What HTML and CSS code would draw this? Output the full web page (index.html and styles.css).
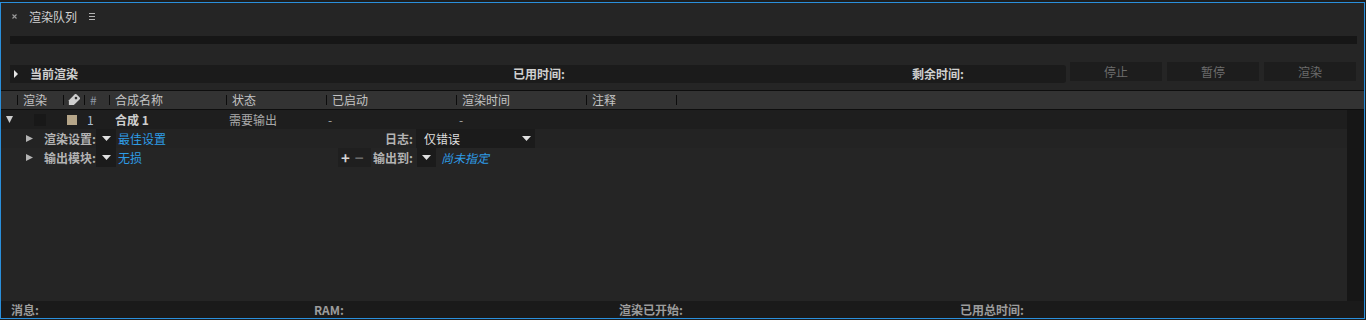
FILE: index.html
```html
<!DOCTYPE html>
<html lang="zh-CN">

<head>
  <meta charset="UTF-8">
  <meta name="viewport" content="width=device-width, initial-scale=1.0">
  <title>渲染队列</title>
  <link rel="stylesheet" href="styles.css">
</head>

<body>

  <section class="panel">
    <!-- Tab -->
    <div class="tab">
      <svg class="tab-close" width="5" height="5" viewBox="0 0 5 5">
        <path d="M0.5 0.5 L4.5 4.5 M4.5 0.5 L0.5 4.5" stroke="#9a9a9a" stroke-width="1.1" />
      </svg>
      <span class="tab-title">渲染队列</span>
      <svg class="tab-menu" width="6" height="7" viewBox="0 0 6 7">
        <path d="M0 0.5 H6 M0 3.5 H6 M0 6.5 H6" stroke="#b4b4b4" stroke-width="1" />
      </svg>
    </div>

    <div class="progress"></div>

    <!-- Current render -->
    <div class="status">
      <div class="current">
        <svg class="cur-twirl" width="4" height="8" viewBox="0 0 4 8">
          <polygon points="0,0 4,4 0,8" fill="#e6e6e6" />
        </svg>
        <span class="cur-title">当前渲染</span>
        <span class="cur-elapsed">已用时间:</span>
        <span class="cur-remain">剩余时间:</span>
      </div>
      <button class="btn">停止</button>
      <button class="btn">暂停</button>
      <button class="btn">渲染</button>
    </div>

    <!-- Column headers -->
    <div class="columns">
      <span class="col w-render">渲染</span>
      <span class="col w-label col-tag">
        <svg width="13" height="13" viewBox="0 0 13 13">
          <g transform="rotate(-45 6.5 6.5)">
            <path d="M0 6.5 L3.5 3 H11.5 a1.5 1.5 0 0 1 1.5 1.5 V8.5 a1.5 1.5 0 0 1 -1.5 1.5 H3.5 Z" fill="#cfcfcf" />
            <circle cx="10" cy="6.5" r="1.3" fill="#333" />
          </g>
        </svg>
      </span>
      <span class="col w-num col-hash">#</span>
      <span class="col w-name">合成名称</span>
      <span class="col w-state">状态</span>
      <span class="col w-start">已启动</span>
      <span class="col w-time">渲染时间</span>
      <span class="col w-note">注释</span>
      <span class="col"></span>
    </div>

    <!-- Queue -->
    <div class="queue">
      <div class="items">
        <div class="item">
          <span class="item-twirl">
            <svg width="7" height="7" viewBox="0 0 7 7">
              <polygon points="0,0 7,0 3.5,7" fill="#cccccc" />
            </svg>
          </span>
          <span class="cell w-render"><span class="check"></span></span>
          <span class="cell w-label"><span class="swatch"></span></span>
          <span class="cell w-num item-num">1</span>
          <span class="cell w-name item-name">合成 1</span>
          <span class="cell w-state item-state">需要输出</span>
          <span class="cell w-start item-dash">-</span>
          <span class="cell w-time item-dash dash-time">-</span>
        </div>

        <div class="sub sub-render">
          <span class="sub-twirl">
            <svg width="7" height="7" viewBox="0 0 7 7">
              <polygon points="0,0 7,3.5 0,7" fill="#b4b4b4" />
            </svg>
          </span>
          <span class="sub-label">渲染设置:</span>
          <span class="drop">
            <svg width="9" height="5" viewBox="0 0 9 5">
              <polygon points="0,0 9,0 4.5,5" fill="#e0e0e0" />
            </svg>
          </span>
          <span class="sub-value value-render">最佳设置</span>
          <span class="sub-label label-right">日志:</span>
          <span class="select">
            仅错误
            <svg width="9" height="5" viewBox="0 0 9 5">
              <polygon points="0,0 9,0 4.5,5" fill="#e0e0e0" />
            </svg>
          </span>
        </div>

        <div class="sub sub-output">
          <span class="sub-twirl">
            <svg width="7" height="7" viewBox="0 0 7 7">
              <polygon points="0,0 7,3.5 0,7" fill="#b4b4b4" />
            </svg>
          </span>
          <span class="sub-label">输出模块:</span>
          <span class="drop">
            <svg width="9" height="5" viewBox="0 0 9 5">
              <polygon points="0,0 9,0 4.5,5" fill="#e0e0e0" />
            </svg>
          </span>
          <span class="sub-value value-output">无损</span>
          <span class="plus-minus">
            <span class="plus">+</span>
            <span class="minus">−</span>
          </span>
          <span class="sub-label label-right">输出到:</span>
          <span class="drop drop-to">
            <svg width="9" height="5" viewBox="0 0 9 5">
              <polygon points="0,0 9,0 4.5,5" fill="#e0e0e0" />
            </svg>
          </span>
          <span class="sub-value value-to">尚未指定</span>
        </div>
      </div>
      <div class="scroll"></div>
    </div>

    <!-- Footer -->
    <footer class="footer">
      <span class="foot-msg">消息:</span>
      <span class="foot-ram">RAM:</span>
      <span class="foot-start">渲染已开始:</span>
      <span>已用总时间:</span>
    </footer>
  </section>

</body>

</html>
```

FILE: styles.css
```css
* {
  box-sizing: border-box;
}

body {
  margin: 0;
  background: #1e1e1e;
  font-family: "Noto Sans CJK SC", "Noto Sans", sans-serif;
  font-size: 12px;
  color: #c8c8c8;
}

/* Panel */
.panel {
  margin-top: 2px;
  width: 1365px;
  height: 317px;
  border: 1px solid #2a8fdb;
  background: #252525;
  display: flex;
  flex-direction: column;
}

.tab {
  height: 27px;
  display: flex;
  align-items: center;
  padding-left: 11px;
}

.tab-title {
  margin-left: 12px;
  width: 48px;
  color: #d2d2d2;
  line-height: 1;
}

.tab-menu {
  margin-left: 12px;
}

.progress {
  margin: 6px 7px 0 9px;
  height: 8px;
  background: #161616;
}

/* Current render */
.status {
  margin-top: 18px;
  height: 21px;
  padding: 0 8px 0 9px;
  display: flex;
  align-items: flex-start;
}

.current {
  margin-top: 3px;
  width: 1056px;
  height: 18px;
  margin-right: 4px;
  background: #1b1b1b;
  border-radius: 0 3px 3px 0;
  display: flex;
  align-items: center;
  padding-left: 4px;
  font-weight: bold;
  color: #d0d0d0;
  line-height: 1;
}

.cur-title {
  margin-left: 12px;
  width: 483px;
}

.cur-elapsed {
  width: 399px;
}

.btn {
  width: 92px;
  height: 19px;
  margin-left: 5px;
  padding: 0;
  border: none;
  background: #1d1d1d;
  color: #6c6c6c;
  font-family: inherit;
  font-size: 12px;
  line-height: 1;
}

.current + .btn {
  margin-left: 0;
}

/* Column headers */
.columns {
  margin-top: 7px;
  height: 20px;
  border-top: 1px solid #0e0e0e;
  border-bottom: 1px solid #0e0e0e;
  background: #333333;
  display: flex;
  align-items: center;
  padding-left: 16px;
  color: #c4c4c4;
  line-height: 1;
}

.col {
  display: flex;
  align-items: center;
  height: 18px;
}

.col::before {
  content: "";
  width: 1px;
  height: 10px;
  background: #0c0c0c;
  margin-right: 5px;
}

.col-tag::before {
  margin-right: 3px;
}

.col-hash {
  color: #8f99a6;
}

.w-render { width: 46px; }
.w-label { width: 21px; }
.w-num { width: 25px; }
.w-name { width: 117px; }
.w-state { width: 100px; }
.w-start { width: 130px; }
.w-time { width: 130px; }
.w-note { width: 90px; }

/* Queue */
.queue {
  flex: 1;
  display: flex;
}

.items {
  flex: 1;
}

.scroll {
  width: 17px;
  background: #161616;
}

.item {
  height: 19px;
  background: #1e1e1e;
  display: flex;
  align-items: center;
  line-height: 1;
}

.item-twirl {
  width: 16px;
  padding-left: 5px;
  display: flex;
}

.cell {
  display: flex;
  align-items: center;
}

.check {
  margin-left: 17px;
  width: 12px;
  height: 12px;
  background: #181818;
}

.swatch {
  margin-left: 4px;
  width: 10px;
  height: 10px;
  background: #b5a588;
}

.item-num {
  padding-left: 3px;
  color: #a9bfd6;
}

.item-name {
  padding-left: 6px;
  font-weight: bold;
  color: #cfcfcf;
}

.item-state {
  padding-left: 3px;
  color: #a8a8a8;
}

.item-dash {
  padding-left: 2px;
  color: #a8a8a8;
}

.dash-time {
  padding-left: 3px;
}

/* Sub rows */
.sub {
  height: 19px;
  display: flex;
  align-items: center;
  padding-left: 25px;
  line-height: 1;
}

.sub-render {
  background: #232323;
}

.sub-twirl {
  width: 9px;
  display: flex;
}

.sub-label {
  width: 61px;
  text-align: right;
  font-weight: bold;
  color: #b4b4b4;
}

.label-right {
  width: 42px;
}

.drop {
  width: 20px;
  height: 19px;
  background: #1b1b1b;
  display: flex;
  align-items: center;
  justify-content: center;
}

.drop-to {
  margin-left: 4px;
  width: 19px;
}

.sub-value {
  margin-left: 2px;
  color: #2e9ce6;
}

.value-render {
  width: 253px;
}

.value-output {
  width: 220px;
}

.value-to {
  margin-left: 5px;
  font-style: italic;
}

.select {
  margin-left: 3px;
  width: 119px;
  height: 19px;
  background: #1b1b1b;
  display: flex;
  align-items: center;
  justify-content: space-between;
  padding: 0 4px 0 8px;
  color: #dedede;
}

.plus-minus {
  width: 33px;
  height: 19px;
  background: #1f1f1f;
  display: flex;
  align-items: center;
  padding-left: 3px;
  font-size: 15px;
  font-weight: bold;
}

.plus {
  color: #d6d6d6;
}

.minus {
  margin-left: 5px;
  color: #6a6a6a;
}

/* Footer */
.footer {
  height: 17px;
  background: #1a1a1a;
  display: flex;
  align-items: center;
  padding-left: 10px;
  font-weight: bold;
  color: #9c9c9c;
  line-height: 1;
}

.foot-msg {
  width: 303px;
}

.foot-ram {
  width: 305px;
}

.foot-start {
  width: 341px;
}
```
